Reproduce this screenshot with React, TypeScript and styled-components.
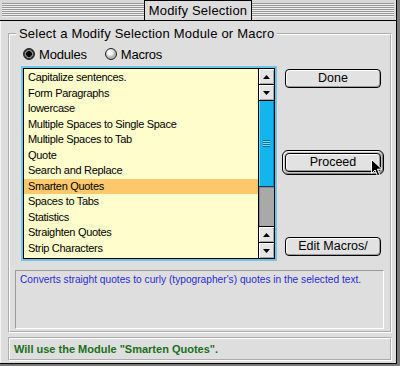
import React from "react";
import styled, { createGlobalStyle } from "styled-components";

const Global = createGlobalStyle`
  html, body { margin: 0; padding: 0; }
  body {
    width: 400px; height: 366px; overflow: hidden;
    background: #7a7a7a;
    font-family: "Liberation Sans", Arial, sans-serif;
  }
`;

const Window = styled.div`
  width: 396px;
  height: 363px;
  background: #dedede;
  border-right: 1px solid #000;
  border-bottom: 1px solid #000;
  display: flex;
  flex-direction: column;
  box-shadow: inset 1px 0 0 #f6f6f6;
`;

const TitleBar = styled.div`
  height: 20px;
  display: flex;
  align-items: stretch;
  border-bottom: 1px solid #000;
  background: #d8d8d8;
  padding: 0 2px;
`;

const Stripes = styled.div`
  flex: 1;
  margin: 3px 0;
  background: repeating-linear-gradient(to bottom, #979797 0 1px, #f0f0f0 1px 2px);
`;

const Title = styled.div`
  padding: 0 4px;
  border-left: 1px solid #000;
  border-right: 1px solid #000;
  border-top: 1px solid #000;
  background: #dcdcdc;
  font-size: 13px;
  line-height: 19px;
  letter-spacing: 0.2px;
  color: #000;
`;

const Content = styled.div`
  display: flex;
  flex-direction: column;
  gap: 4px;
  padding: 12px 4px 1px 8px;
`;

const Group = styled.section`
  position: relative;
  padding: 12px 6px 2px 5px;
  border: 2px groove #ffffff;
  display: flex;
  flex-direction: column;
`;

const GroupLabel = styled.h2`
  position: absolute;
  left: 6px;
  top: -9px;
  margin: 0;
  padding: 0 3px;
  background: #dedede;
  font-size: 13px;
  font-weight: normal;
  line-height: 16px;
  letter-spacing: 0.2px;
  color: #000;
`;

const RadioRow = styled.div`
  height: 14px;
  padding-left: 8px;
  display: flex;
  align-items: center;
`;

const RadioItem = styled.label<{ $gap?: number }>`
  display: flex;
  align-items: center;
  gap: 4px;
  margin-right: ${(p) => p.$gap ?? 0}px;
  font-size: 13px;
  letter-spacing: -0.2px;
  color: #000;
`;

const RadioDot = styled.span<{ $on?: boolean }>`
  width: 10px;
  height: 10px;
  border-radius: 50%;
  border: 1px solid #222;
  background: ${(p) =>
    p.$on
      ? "radial-gradient(circle at 50% 50%, #000 0 2.6px, #8a8a8a 3.2px 3.8px, #3a3a3a 4.2px)"
      : "radial-gradient(circle at 40% 35%, #ffffff 0 1.5px, #e6e6e6 3px, #b4b4b4 5px)"};
`;

const ListRow = styled.div`
  display: flex;
  align-items: flex-start;
  margin-top: 7px;
  margin-left: 8px;
`;

const ListBox = styled.div`
  width: 253px;
  height: 189px;
  border: 1px solid #000;
  box-shadow: 0 0 0 2px #72c4e6;
  background: #fffdcb;
  display: flex;
`;

const Rows = styled.div`
  flex: 1;
  padding-top: 1px;
  display: flex;
  flex-direction: column;
`;

const Row = styled.div<{ $selected?: boolean }>`
  height: 15.5px;
  line-height: 15.5px;
  padding-left: 4px;
  font-size: 11px;
  letter-spacing: -0.3px;
  color: #000;
  white-space: nowrap;
  background: ${(p) => (p.$selected ? "#fdc86c" : "transparent")};
`;

const Scrollbar = styled.div`
  width: 15px;
  border-left: 1px solid #000;
  display: flex;
  flex-direction: column;
`;

const Arrow = styled.div<{ $sep?: boolean }>`
  height: 15px;
  flex: none;
  background: #e4e4e4;
  box-shadow: inset 1px 1px 0 #fff, inset -1px -1px 0 #a8a8a8;
  border-bottom: ${(p) => (p.$sep ? "1px solid #000" : "none")};
  display: flex;
  align-items: center;
  justify-content: center;
`;

const Thumb = styled.div`
  height: 85px;
  flex: none;
  background: #14b4ec;
  border-bottom: 1px solid #1a3a66;
  box-shadow: inset 1px 0 0 #5fd2f6, inset -1px 0 0 #0a86b8;
  display: flex;
  align-items: center;
  justify-content: center;
`;

const Track = styled.div`
  flex: 1;
  background: #a9a9a9;
  border-bottom: 1px solid #000;
  box-shadow: inset 1px 1px 0 #8a8a8a;
`;

const ButtonColumn = styled.div`
  box-sizing: border-box;
  width: 102px;
  height: 193px;
  margin-left: 7px;
  margin-top: -2px;
  padding: 3px 0;
  display: flex;
  flex-direction: column;
  align-items: center;
  justify-content: space-between;
`;

const Button = styled.button`
  width: 96px;
  height: 19px;
  padding: 0;
  border: 1px solid #000;
  border-radius: 4px;
  background: #e2e2e2;
  box-shadow: inset 1px 1px 0 #fff, inset -1px -1px 0 #9c9c9c;
  font-family: "Liberation Sans", Arial, sans-serif;
  font-size: 12.5px;
  color: #000;
  line-height: 17px;
`;

const DefaultRing = styled.div`
  position: relative;
  padding: 2px;
  border: 1px solid #000;
  border-radius: 6px;
  background: #c4c4c4;
  box-shadow: inset 1px 1px 0 #f4f4f4, inset -1px -1px 0 #8a8a8a;
  display: flex;
`;

const Cursor = styled.svg`
  position: absolute;
  left: 88px;
  top: 8px;
  width: 12px;
  height: 18px;
  overflow: visible;
`;

const Description = styled.div`
  margin-top: 11px;
  height: 55px;
  border: 1px solid;
  border-color: #9a9a9a #ffffff #ffffff #9a9a9a;
  padding: 2px 4px 0;
  font-size: 10.2px;
  line-height: 14px;
  color: #2a2ad0;
  white-space: nowrap;
`;

const Status = styled.div`
  height: 20px;
  border: 2px groove #ffffff;
  padding-left: 4px;
  font-size: 11px;
  font-weight: bold;
  line-height: 20px;
  color: #1a6f1a;
  white-space: nowrap;
`;

const Triangle = ({ up }: { up?: boolean }) => (
  <svg width="7" height="4" viewBox="0 0 7 4">
    <path d={up ? "M3.5 0 L7 4 L0 4 Z" : "M0 0 L7 0 L3.5 4 Z"} fill="#000" />
  </svg>
);

const Grip = () => (
  <svg width="7" height="7" viewBox="0 0 7 7">
    {[0, 2, 4, 6].map((y) => (
      <rect key={y} x="0" y={y} width="7" height="1" fill="#0b6f9c" />
    ))}
    {[1, 3, 5].map((y) => (
      <rect key={y} x="0" y={y} width="7" height="1" fill="#7fdcf8" />
    ))}
  </svg>
);

const items = [
  "Capitalize sentences.",
  "Form Paragraphs",
  "lowercase",
  "Multiple Spaces to Single Space",
  "Multiple Spaces to Tab",
  "Quote",
  "Search and Replace",
  "Smarten Quotes",
  "Spaces to Tabs",
  "Statistics",
  "Straighten Quotes",
  "Strip Characters",
];

export default function App() {
  return (
    <>
      <Global />
      <Window>
        <TitleBar>
          <Stripes />
          <Title>Modify Selection</Title>
          <Stripes />
        </TitleBar>
        <Content>
          <Group>
            <GroupLabel>Select a Modify Selection Module or Macro</GroupLabel>
            <RadioRow>
              <RadioItem $gap={18}>
                <RadioDot $on />
                Modules
              </RadioItem>
              <RadioItem>
                <RadioDot />
                Macros
              </RadioItem>
            </RadioRow>
            <ListRow>
              <ListBox>
                <Rows>
                  {items.map((t) => (
                    <Row key={t} $selected={t === "Smarten Quotes"}>
                      {t}
                    </Row>
                  ))}
                </Rows>
                <Scrollbar>
                  <Arrow $sep>
                    <Triangle up />
                  </Arrow>
                  <Arrow $sep>
                    <Triangle />
                  </Arrow>
                  <Thumb>
                    <Grip />
                  </Thumb>
                  <Track />
                  <Arrow $sep>
                    <Triangle up />
                  </Arrow>
                  <Arrow>
                    <Triangle />
                  </Arrow>
                </Scrollbar>
              </ListBox>
              <ButtonColumn>
                <Button>Done</Button>
                <DefaultRing>
                  <Button>Proceed</Button>
                  <Cursor viewBox="0 0 12 18">
                    <path
                      d="M0.5 0.5 L0.5 14.5 L4 11 L6.5 16.8 L8.8 15.8 L6.4 10.2 L11 10.2 Z"
                      fill="#000"
                      stroke="#fff"
                      strokeWidth="1"
                    />
                  </Cursor>
                </DefaultRing>
                <Button>Edit Macros/</Button>
              </ButtonColumn>
            </ListRow>
            <Description>
              Converts straight quotes to curly (typographer's) quotes in the selected text.
            </Description>
          </Group>
          <Status>Will use the Module "Smarten Quotes".</Status>
        </Content>
      </Window>
    </>
  );
}
